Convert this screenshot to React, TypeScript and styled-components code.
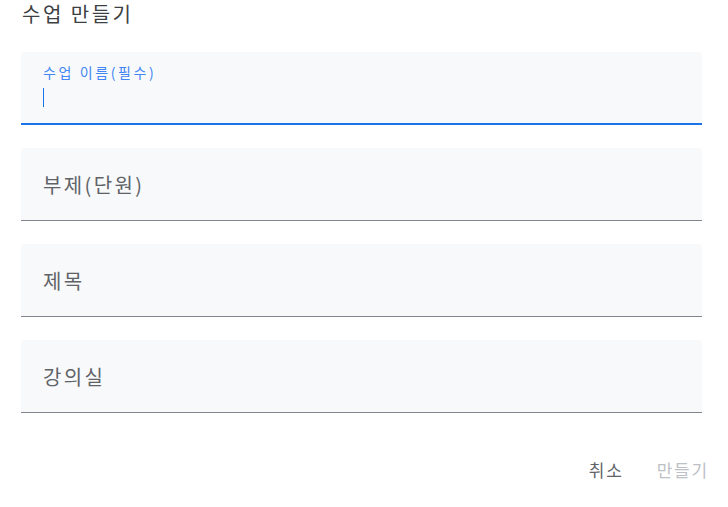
import React from "react";
import styled, { createGlobalStyle } from "styled-components";

const Global = createGlobalStyle`
  html, body { margin: 0; padding: 0; background: #fff; }
  body { font-family: "Noto Sans CJK KR", "Noto Sans", Roboto, sans-serif; }
`;

const Page = styled.div`
  width: 728px;
  height: 507px;
  box-sizing: border-box;
  padding: 0 26px 0 21px;
  display: flex;
  flex-direction: column;
`;

const Title = styled.h1`
  margin: 0;
  height: 52px;
  padding: 2px 0 0 1px;
  box-sizing: border-box;
  font-size: 20px;
  font-weight: 400;
  color: #3c4043;
  line-height: 24px;
  letter-spacing: 2.5px;
`;

const Fields = styled.div`
  display: flex;
  flex-direction: column;
  gap: 23px;
`;

const Field = styled.div<{ $focused?: boolean }>`
  height: 73px;
  box-sizing: border-box;
  background: #f8f9fa;
  border-radius: 4px 4px 0 0;
  border-bottom: ${(p) => (p.$focused ? "2px solid #1a73e8" : "1px solid #80868b")};
  padding: 0 22px;
  display: flex;
  flex-direction: column;
  justify-content: ${(p) => (p.$focused ? "flex-start" : "center")};
`;

const FloatLabel = styled.div`
  margin-top: 12px;
  font-size: 14px;
  line-height: 16px;
  color: #4285f4;
  letter-spacing: 2.6px;
`;

const Caret = styled.div`
  margin-top: 8px;
  width: 1px;
  height: 19px;
  background: #1a73e8;
`;

const Placeholder = styled.div`
  font-size: 20px;
  line-height: 24px;
  color: #5f6368;
  letter-spacing: 2.4px;
  padding-top: 1px;
`;

const Actions = styled.div`
  display: flex;
  justify-content: flex-end;
  align-items: center;
  gap: 33px;
  margin-top: 45px;
  margin-right: -7px;
`;

const TextButton = styled.button<{ $disabled?: boolean }>`
  border: none;
  background: none;
  padding: 0;
  font-family: inherit;
  font-size: 17px;
  line-height: 24px;
  letter-spacing: 1.8px;
  color: ${(p) => (p.$disabled ? "#bdc1c6" : "#5f6368")};
  cursor: ${(p) => (p.$disabled ? "default" : "pointer")};
`;

export default function App() {
  return (
    <>
      <Global />
      <Page>
        <Title>수업 만들기</Title>
        <Fields>
          <Field $focused>
            <FloatLabel>수업 이름(필수)</FloatLabel>
            <Caret />
          </Field>
          <Field>
            <Placeholder>부제(단원)</Placeholder>
          </Field>
          <Field>
            <Placeholder>제목</Placeholder>
          </Field>
          <Field>
            <Placeholder>강의실</Placeholder>
          </Field>
        </Fields>
        <Actions>
          <TextButton>취소</TextButton>
          <TextButton $disabled>만들기</TextButton>
        </Actions>
      </Page>
    </>
  );
}
